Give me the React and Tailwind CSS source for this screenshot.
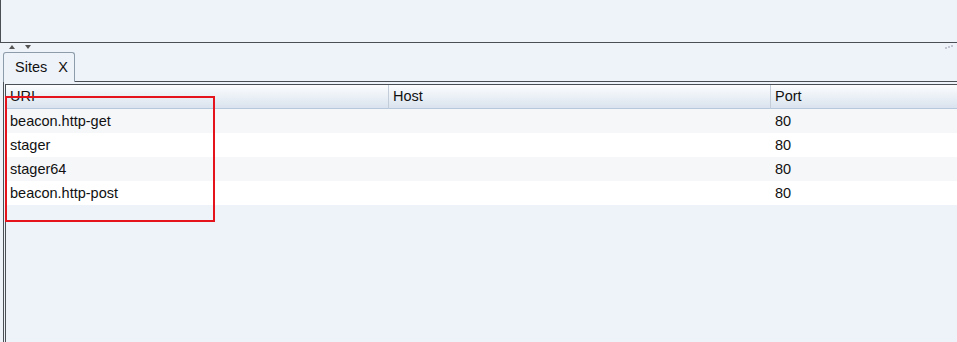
import { Fragment } from "react";

const rows = [
  { uri: "beacon.http-get", host: "", port: "80" },
  { uri: "stager", host: "", port: "80" },
  { uri: "stager64", host: "", port: "80" },
  { uri: "beacon.http-post", host: "", port: "80" },
];

function App() {
  return (
    <div
      className="relative w-[957px] h-[342px] overflow-hidden bg-[#eef2f9] text-[14.5px] text-[#111]"
      style={{ fontFamily: '"Liberation Sans", Arial, sans-serif' }}
    >
      {/* top pane */}
      <div className="h-[43px] border-l border-b border-[#4a4f55] bg-[#eef2f9]" />

      {/* split divider */}
      <div className="h-[8px] flex items-center pl-[9px] gap-[10px] relative">
        <svg width="6" height="4" viewBox="0 0 6 4">
          <path d="M0 4 L3 0 L6 4 Z" fill="#555" />
        </svg>
        <svg width="6" height="4" viewBox="0 0 6 4">
          <path d="M0 0 L6 0 L3 4 Z" fill="#555" />
        </svg>
        <div className="ml-auto mr-[4px] flex gap-[1px] items-end">
          <span className="w-[2px] h-[2px] bg-[#c0c7d2]" />
          <span className="w-[2px] h-[2px] bg-[#c0c7d2] mb-[1px]" />
          <span className="w-[2px] h-[2px] bg-[#c0c7d2] mb-[2px]" />
        </div>
      </div>

      {/* tab strip */}
      <div className="flex h-[31px] items-end">
        <div className="w-[3px] h-full" />
        <div className="w-[72px] h-[30px] border border-b-0 border-[#8e9caa] rounded-t-[3px] flex items-center pl-[11px] pt-[1px] gap-[11px] bg-[#eef2f9]">
          <span>Sites</span>
          <span>X</span>
        </div>
        <div className="flex-1 border-b border-[#4a4f55]" />
      </div>

      {/* tab body */}
      <div className="ml-[3px] h-full border-l border-[#4a4f55] pt-[2px] pl-[1px]">
        <div className="h-full border-t border-l border-[#4a4f55] bg-[#eef2f9]">
          <div className="grid grid-cols-[382px_382px_1fr]">
            {["URI", "Host", "Port"].map((h, i) => (
              <div
                key={h}
                className={`h-[24px] flex items-center pl-[4px] pt-[1px] bg-gradient-to-b from-[#fcfdfe] to-[#d9e3ee] border-b border-[#b5c8dc] ${
                  i > 0 ? "border-l border-l-[#c2cdd9]" : ""
                }`}
              >
                {h}
              </div>
            ))}
            {rows.map((r, i) => (
              <Fragment key={r.uri}>
                <div
                  className={`h-[24px] flex items-center pl-[4px] pt-[1px] ${
                    i % 2 === 0 ? "bg-[#f6f7f9]" : "bg-white"
                  }`}
                >
                  {r.uri}
                </div>
                <div
                  className={`h-[24px] flex items-center pl-[5px] pt-[1px] ${
                    i % 2 === 0 ? "bg-[#f6f7f9]" : "bg-white"
                  }`}
                >
                  {r.host}
                </div>
                <div
                  className={`h-[24px] flex items-center pl-[5px] pt-[1px] ${
                    i % 2 === 0 ? "bg-[#f6f7f9]" : "bg-white"
                  }`}
                >
                  {r.port}
                </div>
              </Fragment>
            ))}
          </div>
        </div>
      </div>

      {/* red annotation box */}
      <div className="absolute left-[5px] top-[96px] w-[210px] h-[126px] border-2 border-[#e5131b]" />
    </div>
  );
}

export default App;
